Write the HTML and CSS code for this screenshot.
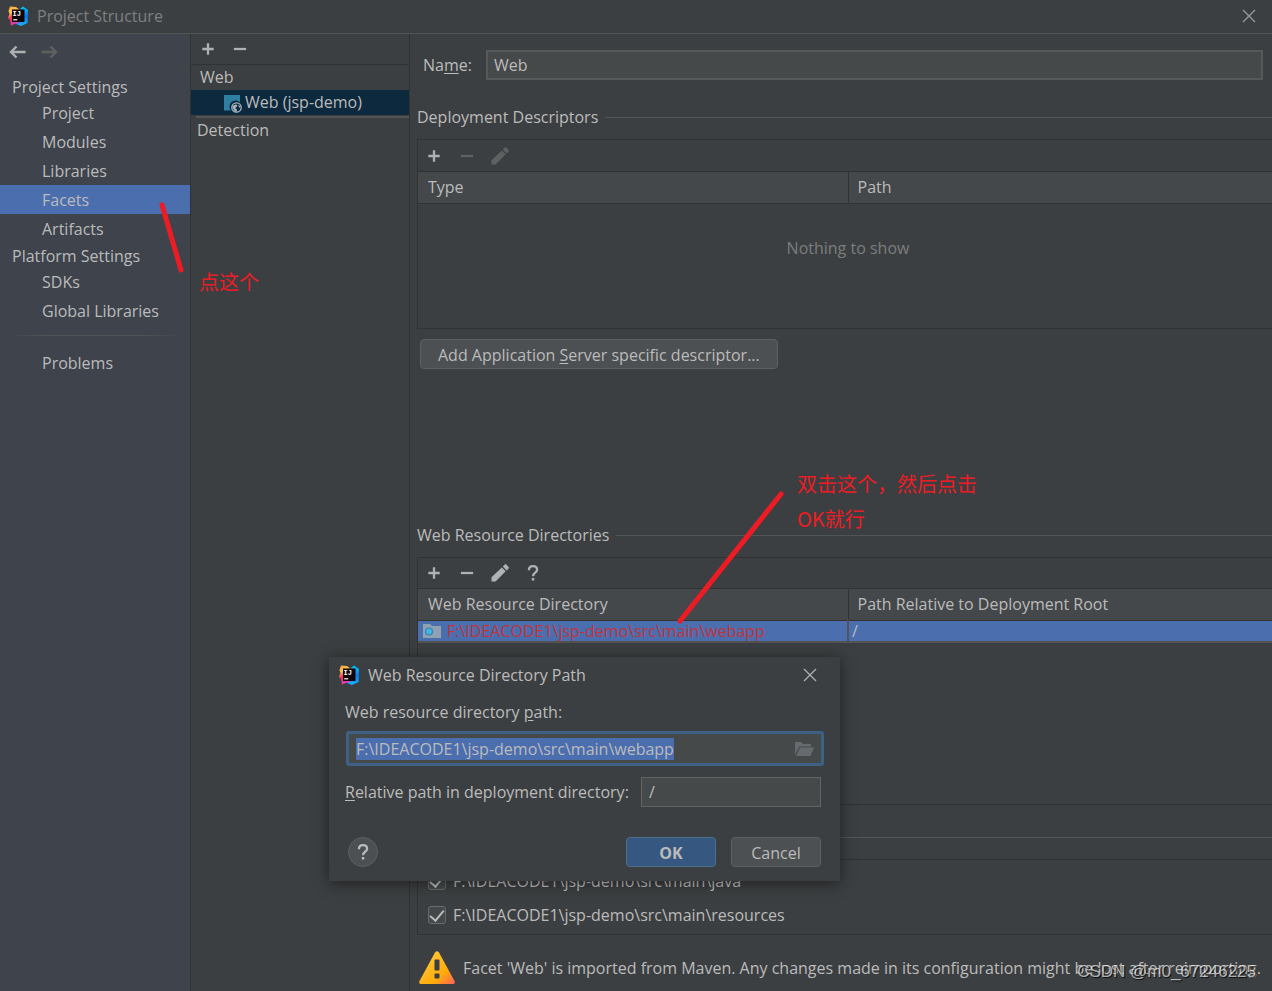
FILE: index.html
```html
<!DOCTYPE html>
<html lang="en">
<head>
<meta charset="utf-8">
<title>Project Structure</title>
<link rel="stylesheet" href="styles.css">
</head>
<body>
<svg class="defs" aria-hidden="true">
  <defs>
    <linearGradient id="lg-warm" x1="0" y1="0" x2="0.4" y2="1"><stop offset="0" stop-color="#fc9b3a"/><stop offset="0.35" stop-color="#ffc34d"/><stop offset="0.6" stop-color="#f5325b"/><stop offset="1" stop-color="#ff318c"/></linearGradient>
    <linearGradient id="lg-cool" x1="0" y1="0" x2="0" y2="1"><stop offset="0" stop-color="#08c8f5"/><stop offset="0.5" stop-color="#087cfa"/><stop offset="1" stop-color="#16b5f8"/></linearGradient>
    <linearGradient id="lg-warn" x1="0.2" y1="0.2" x2="1" y2="1"><stop offset="0" stop-color="#ffc533"/><stop offset="0.6" stop-color="#ffab0a"/><stop offset="1" stop-color="#ff6159"/></linearGradient>
    <symbol id="logo" viewBox="0 0 20 20">
      <path d="M12 3L15 0.5L20 4L19.5 17L13 20L8 18Z" fill="url(#lg-cool)"/>
      <path d="M2 0.5L8 1L12 4L10 17L8 17.5L3 19.5L2 14L0 12L1.5 8L0.5 5Z" fill="url(#lg-warm)"/>
      <path d="M3 19.5L4 14L9 16L12 16L10 17.500L7 17Z" fill="#d740b8"/>
      <path d="M4 3.500h12.500v12.500H4z" fill="#100509"/>
      <text class="logo-text" x="4.6" y="10">IJ</text>
      <path d="M5.2 13.2h4v1.2h-4z" fill="#fff"/>
    </symbol>
    <symbol id="plus" viewBox="0 0 16 16"><path d="M8 1.500v13M1.500 8h13" stroke="currentColor" stroke-width="2.6"/></symbol>
    <symbol id="minus" viewBox="0 0 16 16"><path d="M1 8h14" stroke="currentColor" stroke-width="2.6"/></symbol>
    <symbol id="pencil" viewBox="0 0 18 18"><path d="M0.5 17.5v-4.2L10.8 3.4l3.9 3.9L4.6 17.5zM11.8 2.5l1.7-1.7c.6-.6 1.4-.6 2 0l1.9 1.9c.6.6.6 1.4 0 2l-1.7 1.7z" fill="currentColor"/></symbol>
    <symbol id="question" viewBox="0 0 16 18"><path d="M3.900 6.200C3.900 3.500 5.500 2.200 8 2.200s4.100 1.400 4.100 3.600c0 2.900-4.100 3-4.100 6.500" fill="none" stroke="currentColor" stroke-width="2.3"/><path d="M6.8 14h2.5v2.5H6.8z" fill="currentColor"/></symbol>
    <symbol id="arrow" viewBox="0 0 18 14"><path d="M17.500 7H3M8.500 1.500L3 7l5.500 5.500" fill="none" stroke="currentColor" stroke-width="2.4"/></symbol>
    <symbol id="cross" viewBox="0 0 14 14"><path d="M1 1l12 12M13 1L1 13" stroke="currentColor" stroke-width="1.3"/></symbol>
  </defs>
</svg>

<div class="window">
  <header class="titlebar">
    <svg class="logo"><use href="#logo"/></svg>
    <h1 class="titlebar-text">Project Structure</h1>
    <button class="icon-button" type="button" aria-label="Close"><svg class="icon-cross"><use href="#cross"/></svg></button>
  </header>

  <div class="columns">
    <nav class="sidebar">
      <div class="history">
        <button class="icon-button" type="button" aria-label="Back"><svg class="icon-arrow"><use href="#arrow"/></svg></button>
        <button class="icon-button forward" type="button" aria-label="Forward" disabled><svg class="icon-arrow"><use href="#arrow"/></svg></button>
      </div>
      <h2 class="nav-heading">Project Settings</h2>
      <a class="nav-item" href="#project">Project</a>
      <a class="nav-item" href="#modules">Modules</a>
      <a class="nav-item" href="#libraries">Libraries</a>
      <a class="nav-item selected" href="#facets">Facets</a>
      <a class="nav-item" href="#artifacts">Artifacts</a>
      <h2 class="nav-heading">Platform Settings</h2>
      <a class="nav-item" href="#sdks">SDKs</a>
      <a class="nav-item" href="#global">Global Libraries</a>
      <hr class="nav-separator">
      <a class="nav-item" href="#problems">Problems</a>
    </nav>

    <section class="facets">
      <div class="facets-toolbar">
        <button class="icon-button" type="button" aria-label="Add facet"><svg class="icon"><use href="#plus"/></svg></button>
        <button class="icon-button" type="button" aria-label="Remove facet"><svg class="icon"><use href="#minus"/></svg></button>
      </div>
      <div class="tree-row">Web</div>
      <div class="tree-row child">
        <svg class="facet-icon" viewBox="0 0 18 18"><path d="M0 0h16v7.500A6 6 0 0 0 7 15.500H0z" fill="#2f7fa3"/><circle cx="12.500" cy="12.500" r="4.700" fill="none" stroke="#a9b7c0" stroke-width="1.300"/><path d="M8.500 11l3-1.500 2 .5-1 2-1.500 1 2 1.500-.5 2.500-2-1-1.500-2.500zM14 9.500l2.500 2-1 1.500z" fill="#a9b7c0"/></svg>
        <span>Web (jsp-demo)</span>
      </div>
      <hr class="tree-separator">
      <div class="tree-row detection">Detection</div>
    </section>

    <main class="editor">
      <div class="name-row">
        <label for="facet-name">Na<u>m</u>e:</label>
        <input class="field name-field" id="facet-name" type="text" value="Web">
      </div>

      <h3 class="section-title">Deployment Descriptors</h3>
      <div class="panel descriptors">
        <div class="panel-toolbar">
          <button class="icon-button" type="button" aria-label="Add"><svg class="icon"><use href="#plus"/></svg></button>
          <button class="icon-button" type="button" aria-label="Remove" disabled><svg class="icon"><use href="#minus"/></svg></button>
          <button class="icon-button" type="button" aria-label="Edit" disabled><svg class="icon-large"><use href="#pencil"/></svg></button>
        </div>
        <table class="grid">
          <thead><tr><th>Type</th><th>Path</th></tr></thead>
        </table>
        <p class="empty">Nothing to show</p>
      </div>
      <button class="button add-descriptor" type="button">Add Application <u>S</u>erver specific descriptor...</button>

      <h3 class="section-title resources-title">Web Resource Directories</h3>
      <div class="panel resources">
        <div class="panel-toolbar">
          <button class="icon-button" type="button" aria-label="Add"><svg class="icon"><use href="#plus"/></svg></button>
          <button class="icon-button" type="button" aria-label="Remove"><svg class="icon"><use href="#minus"/></svg></button>
          <button class="icon-button" type="button" aria-label="Edit"><svg class="icon-large"><use href="#pencil"/></svg></button>
          <button class="icon-button" type="button" aria-label="Help"><svg class="icon-large"><use href="#question"/></svg></button>
        </div>
        <table class="grid">
          <thead><tr><th>Web Resource Directory</th><th>Path Relative to Deployment Root</th></tr></thead>
          <tbody><tr>
            <td><div class="path-cell"><svg class="folder-icon" viewBox="0 0 18 15"><path d="M0 1h7l2 2h9v12H0z" fill="#8fa2b3"/><circle cx="6" cy="8.500" r="3.500" fill="#40b6e0" stroke="#3f7fb0" stroke-width="1.200"/></svg><span>F:\IDEACODE1\jsp-demo\src\main\webapp</span></div></td>
            <td>/</td>
          </tr></tbody>
        </table>
      </div>

      <hr class="section-line">
      <div class="panel roots">
        <label class="check"><input type="checkbox" checked>F:\IDEACODE1\jsp-demo\src\main\java</label>
        <label class="check"><input type="checkbox" checked>F:\IDEACODE1\jsp-demo\src\main\resources</label>
      </div>

      <div class="warning">
        <svg class="warning-icon" viewBox="0 0 36 33"><path d="M16 1.500Q18-1 20 1.500L35.500 30Q36.500 33 34 33H2Q-.5 33 .5 30Z" fill="url(#lg-warn)"/><rect x="15.500" y="8.500" width="5" height="11" rx="1" fill="#3c3f41"/><rect x="15.500" y="22.500" width="5" height="5" rx="1" fill="#3c3f41"/></svg>
        <span>Facet 'Web' is imported from Maven. Any changes made in its configuration might be lost after reimporting.</span>
      </div>
    </main>
  </div>

  <form class="dialog" role="dialog" aria-labelledby="dialog-title">
    <div class="dialog-head">
      <svg class="logo"><use href="#logo"/></svg>
      <h2 class="dialog-title" id="dialog-title">Web Resource Directory Path</h2>
      <button class="icon-button" type="button" aria-label="Close"><svg class="icon-cross"><use href="#cross"/></svg></button>
    </div>
    <label class="dialog-label" for="dir-path">Web resource directory <u>p</u>ath:</label>
    <div class="browse-field">
      <input id="dir-path" type="text" value="F:\IDEACODE1\jsp-demo\src\main\webapp">
      <button class="icon-button" type="button" aria-label="Browse"><svg class="browse-icon" viewBox="0 0 19 14"><path d="M0 13V0h6l2 2h8v2.500H4.500z" fill="#646a6d"/><path d="M5 5.500h14L15.500 14H1z" fill="#646a6d"/></svg></button>
    </div>
    <div class="relative-row">
      <label for="rel-path"><u>R</u>elative path in deployment directory:</label>
      <input class="field" id="rel-path" type="text" value="/">
    </div>
    <div class="dialog-actions">
      <button class="help" type="button" aria-label="Help"><svg class="icon-large"><use href="#question"/></svg></button>
      <button class="button primary" type="submit">OK</button>
      <button class="button" type="button">Cancel</button>
    </div>
  </form>

  <svg class="marks" aria-hidden="true">
    <path d="M162 205L181 270" stroke-width="5"/>
    <path d="M781 494L680 621" stroke-width="5"/>
  </svg>
  <p class="note note-facets" lang="zh">点这个</p>
  <p class="note note-path" lang="zh">双击这个，然后点击<br>OK就行</p>
  <p class="watermark">CSDN @m0_67246225</p>
</div>
<script src="script.js"></script>
</body>
</html>
```
FILE: script.js
```js
const pathField = document.getElementById("dir-path");
pathField.focus();
pathField.select();
```
FILE: styles.css
```css
* { box-sizing: border-box; }

body {
  margin: 0;
  background: #3c3f41;
  color: #bbbbbb;
  font: 16px/22px "Open Sans", "Noto Sans", "Noto Sans CJK SC", sans-serif;
}

h1, h2, h3, p { margin: 0; font-size: inherit; font-weight: 400; }
hr { border: 0; margin: 0; }
u { text-underline-offset: 2px; }
input, button { font: inherit; color: inherit; }
svg { display: block; flex: none; }
.defs { position: absolute; width: 0; height: 0; }

.window {
  position: relative;
  display: flex;
  flex-direction: column;
  min-height: 100vh;
  overflow: hidden;
}

.logo { width: 20px; height: 20px; }
.logo-text { font: bold 7px "Liberation Mono", monospace; fill: #fff; }
.icon { width: 14px; height: 14px; }
.icon-large { width: 18px; height: 18px; }
.icon-arrow { width: 18px; height: 14px; }
.icon-cross { width: 14px; height: 14px; }

.icon-button {
  display: flex;
  justify-content: center;
  padding: 0;
  border: 0;
  background: none;
  color: #afb1b3;
}
.icon-button:disabled { color: #5f6161; }

.titlebar {
  display: flex;
  align-items: center;
  gap: 9px;
  height: 34px;
  padding: 0 16px 2px 8px;
  border-bottom: 1px solid #515556;
}
.titlebar-text { flex: 1; color: #7e8081; }
.titlebar .icon-button { color: #97999b; }

.columns { flex: 1; display: flex; }

.sidebar {
  flex: none;
  width: 191px;
  background: #3e434c;
  border-right: 1px solid #323232;
}
.history {
  display: flex;
  gap: 15px;
  height: 40px;
  padding: 11px 8px;
}
.forward .icon-arrow { transform: scaleX(-1); }
.nav-heading { height: 24px; padding-left: 12px; line-height: 26px; }
.nav-item {
  display: block;
  height: 29px;
  padding-left: 42px;
  line-height: 30px;
  color: inherit;
  text-decoration: none;
}
.nav-item.selected { background: #4b6eaf; }
.nav-separator {
  height: 1px;
  margin: 10px 10px 12px;
  background: linear-gradient(90deg, transparent, #515355 20%, #515355 80%, transparent);
}

.facets { flex: none; width: 219px; border-right: 1px solid #323232; }
.facets-toolbar {
  display: flex;
  align-items: center;
  gap: 18px;
  height: 31px;
  padding-left: 10px;
  border-bottom: 1px solid #323232;
}
.tree-row {
  display: flex;
  align-items: center;
  gap: 3px;
  height: 25px;
  padding: 0 0 2px 9px;
}
.tree-row.child { padding-left: 33px; background: #0d293e; }
.tree-row.detection { padding-left: 6px; }
.facet-icon { width: 18px; height: 18px; margin-top: 4px; }
.tree-separator { height: 2px; margin: 1px 0 0 5px; background: #515355; }

.editor { flex: 1; min-width: 0; padding: 16px 0 0 7px; }

.name-row { display: flex; align-items: center; gap: 14px; padding: 0 9px 0 6px; }
.field {
  height: 30px;
  min-width: 0;
  padding: 0 7px;
  background: #45494a;
  border: 1px solid #646464;
  border-radius: 0;
  outline: 0;
}
.name-field { flex: 1; border-width: 2px; border-color: #55595a; padding: 0 6px; }

.section-title { display: flex; align-items: center; gap: 7px; margin-top: 26px; }
.section-title::after { content: ""; flex: 1; height: 1px; background: #515556; }

/* Panels run on past the window's right edge. */
.panel {
  margin: 11px -7px 0 0;
  border: 1px solid #323232;
}
.panel-toolbar {
  display: flex;
  align-items: center;
  gap: 15px;
  height: 32px;
  padding-left: 7px;
  border-bottom: 1px solid #323232;
}
.panel-toolbar .icon-button { width: 18px; }
.descriptors { height: 190px; }
.resources { height: 248px; }
.resources .panel-toolbar { height: 31px; }

.grid { width: 100%; table-layout: fixed; border-collapse: collapse; }
.grid th {
  height: 31px;
  padding: 0 9px;
  text-align: left;
  font-weight: 400;
  background: #45484a;
  border-bottom: 1px solid #323232;
}
.grid th:first-child { padding-left: 10px; }
.grid th + th { border-left: 1px solid #323232; }
.grid td {
  height: 22px;
  padding: 0 5px;
  line-height: 20px;
  background: #4b6eaf;
  border-bottom: 2px solid #515355;
}
.grid td + td { padding-left: 3px; border-left: 2px solid #515355; }
.path-cell { display: flex; align-items: center; gap: 6px; color: #c0353c; }
.folder-icon { width: 18px; height: 15px; }
.empty { margin-top: 33px; text-align: center; color: #7b7d7e; }

.button {
  height: 30px;
  padding: 1px 17px 0;
  background: #4c5052;
  border: 1px solid #5e6060;
  border-radius: 4px;
}
.add-descriptor { display: block; margin: 10px 0 0 3px; }

.resources-title { margin-top: 155px; }

.section-line { height: 1px; margin-top: 32px; background: #515556; }
.roots { display: grid; gap: 12px; height: 76px; margin-top: 21px; padding: 10px; }
.check { display: flex; align-items: center; gap: 7px; height: 22px; }
.check input {
  display: flex;
  justify-content: center;
  appearance: none;
  width: 18px;
  height: 18px;
  margin: 0;
  background: #43494a;
  border: 1px solid #6b6b6b;
  border-radius: 3px;
}
.check input:checked::after {
  content: "";
  width: 6px;
  height: 12px;
  border: solid #bbbbbb;
  border-width: 0 2px 2px 0;
  transform: rotate(40deg);
}

.warning { display: flex; align-items: center; gap: 8px; padding: 16px 0 6px 2px; white-space: nowrap; }
.warning-icon { width: 36px; height: 33px; }

.dialog {
  position: absolute;
  left: 329px;
  top: 657px;
  width: 511px;
  padding: 0 19px 14px 16px;
  background: #3c3f41;
  box-shadow: 0 2px 14px rgba(0, 0, 0, 0.5);
}
.dialog-head { display: flex; align-items: center; gap: 9px; height: 36px; margin: 0 4px 8px -6px; }
.dialog-title { flex: 1; }
.dialog-label { display: block; }
.browse-field {
  display: flex;
  align-items: center;
  height: 35px;
  margin: 8px -3px 11px 1px;
  padding: 0 7px;
  background: #45494a;
  border: 3px solid #3d6185;
  border-radius: 3px;
}
.browse-field input {
  flex: 1;
  min-width: 0;
  padding: 0;
  border: 0;
  outline: 0;
  background: none;
}
.browse-field input::selection { background: #4b6eaf; color: #bbbbbb; }
.browse-icon { width: 19px; height: 14px; }
.relative-row { display: flex; align-items: center; justify-content: space-between; }
.relative-row .field { width: 180px; }
.dialog-actions { display: flex; align-items: center; gap: 15px; margin-top: 30px; }
.dialog-actions .button { width: 90px; padding: 1px 0 0; }
.dialog-actions .primary { background: #365880; border-color: #4c708c; font-weight: 700; }
.help {
  display: grid;
  place-items: center;
  width: 30px;
  height: 30px;
  margin: 0 auto 0 3px;
  padding: 0;
  background: #4c5052;
  border: 1px solid #5e6060;
  border-radius: 50%;
}

.marks {
  position: absolute;
  inset: 0;
  width: 100%;
  height: 100%;
  pointer-events: none;
  fill: none;
  stroke: #ed1c24;
  stroke-linecap: round;
}
.note {
  position: absolute;
  color: #ed1c24;
  font: 400 20px/35px "Noto Sans CJK SC", sans-serif;
}
.note-facets { left: 199px; top: 264px; }
.note-path { left: 797px; top: 466px; }
.watermark {
  position: absolute;
  right: 16px;
  bottom: 8px;
  font: 17px/22px "Liberation Sans", sans-serif;
  color: rgba(255, 255, 255, 0.65);
  text-shadow: 1px 1px 1px rgba(0, 0, 0, 0.8);
}
```
